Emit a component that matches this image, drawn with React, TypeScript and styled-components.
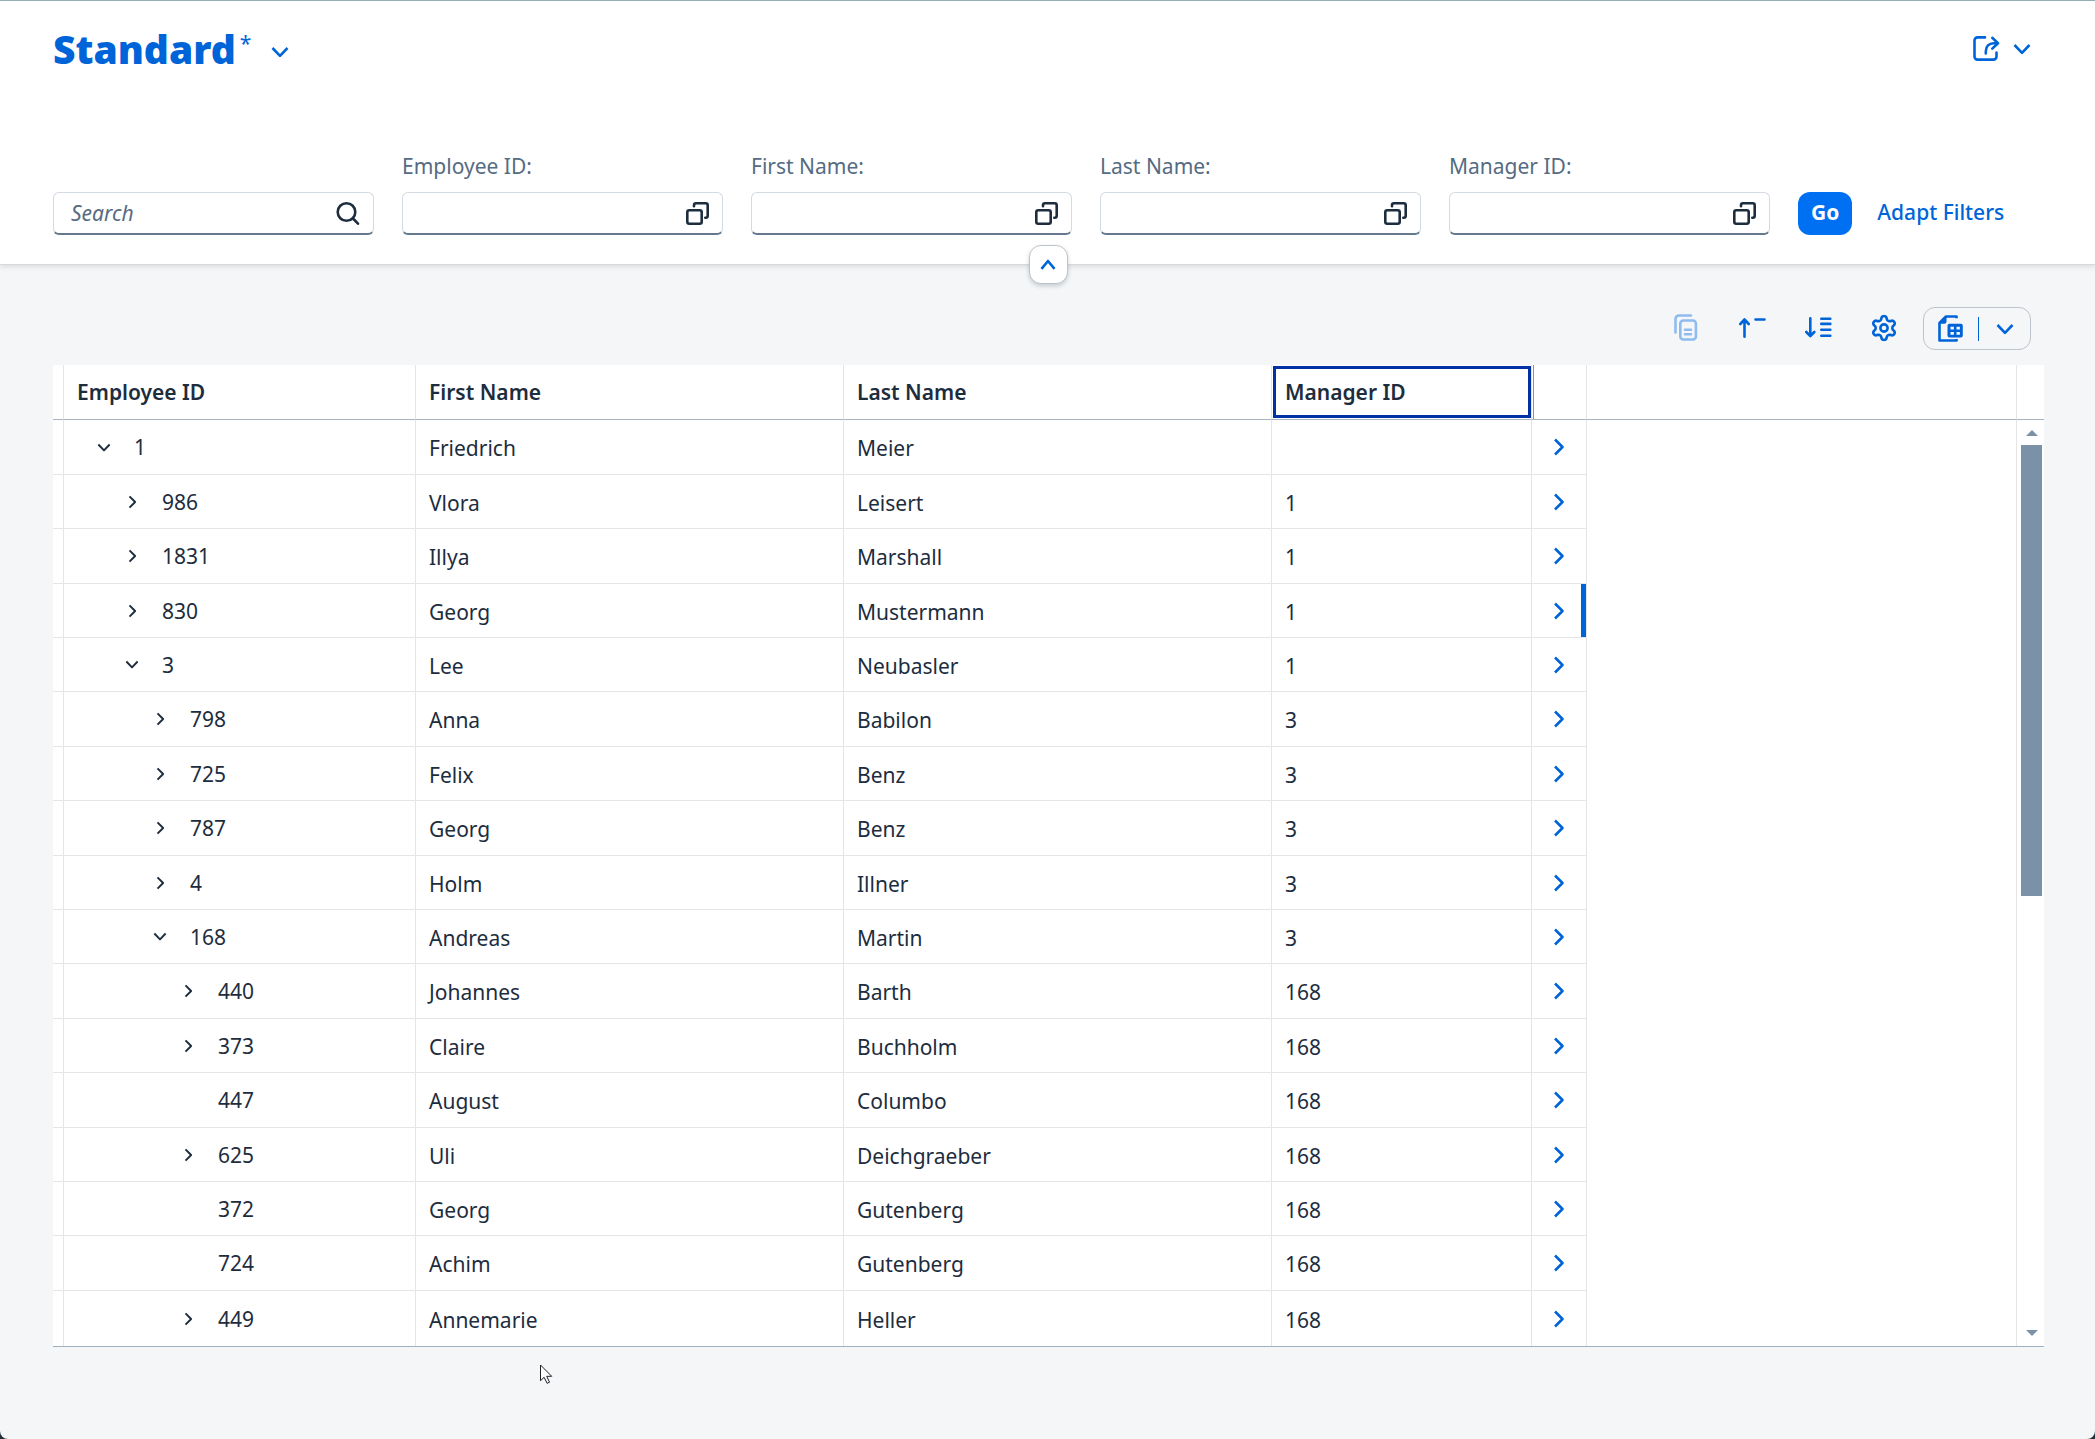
import React from "react";
import styled, { createGlobalStyle, css } from "styled-components";

const color = {
  brand: "#0064d9",
  emphasized: "#0070f2",
  text: "#1d2d3e",
  label: "#556b82",
  line: "#e5e5e5",
  headerLine: "#a8b3bd",
  page: "#f5f6f7",
  focus: "#0032a5",
  scroll: "#7b91a8",
};

const GlobalStyle = createGlobalStyle`
  *, *::before, *::after { box-sizing: border-box; }
  body {
    margin: 0;
    background: #22303a;
    color: ${color.text};
    font-family: "Noto Sans", "Open Sans", sans-serif;
    font-size: 21px;
    line-height: 28px;
  }
  button, input { font: inherit; color: inherit; }
`;

const Page = styled.div`
  min-height: 100vh;
  display: flex;
  flex-direction: column;
  background: ${color.page};
  border-top: 1px solid #8fb1b5;
  border-radius: 0 0 8px 8px;
  overflow: hidden;
  position: relative;
`;

const Header = styled.header`
  position: relative;
  background: #fff;
  padding: 24px 53px 29px;
  border-bottom: 1px solid #d9d9d9;
  box-shadow: 0 2px 5px rgba(34, 53, 72, 0.12);
`;

const TitleBar = styled.div`
  display: flex;
  justify-content: space-between;
  align-items: center;
  height: 48px;
  padding-right: 11px;
`;

const VariantButton = styled.button`
  display: flex;
  align-items: center;
  padding: 0;
  border: 0;
  background: none;
  color: ${color.brand};
  cursor: pointer;
`;

const VariantTitle = styled.h1`
  margin: 0;
  font-size: 39px;
  line-height: 48px;
  font-weight: 900;
`;

const Modified = styled.span`
  align-self: flex-start;
  margin: 4px 20px 0 4px;
`;

const VariantArrow = styled.span`
  display: flex;
  padding-top: 6px;
`;

const IconButton = styled.button<{ $width?: number }>`
  display: inline-flex;
  align-items: center;
  justify-content: center;
  gap: 13px;
  width: ${(p) => (p.$width ? `${p.$width}px` : "auto")};
  height: 43px;
  padding: 0;
  border: 0;
  background: none;
  color: ${color.brand};
  cursor: pointer;
  &:disabled { color: #8fbcf0; cursor: default; }
`;

const ToolButton = styled(IconButton)`
  width: 66px;
  padding-bottom: 2px;
`;

const FilterBar = styled.form`
  display: flex;
  align-items: flex-end;
  gap: 28px;
  margin-top: 79px;
`;

const FilterItem = styled.div`
  flex: 0 1 321px;
  min-width: 0;
  display: flex;
  flex-direction: column;
`;

const FilterLabel = styled.label`
  margin-bottom: 12px;
  color: ${color.label};
`;

const InputBox = styled.div`
  display: flex;
  align-items: center;
  height: 43px;
  padding: 0 13px 0 17px;
  background: #fff;
  border: 1px solid #d3dae1;
  border-bottom: 2px solid #64798e;
  border-radius: 6px;
`;

const TextInput = styled.input`
  flex: 1;
  min-width: 0;
  padding: 0;
  border: 0;
  outline: 0;
  background: none;
  &::placeholder { color: ${color.label}; font-style: italic; opacity: 1; }
`;

const InputIcon = styled.button`
  display: flex;
  padding: 0;
  border: 0;
  background: none;
  cursor: pointer;
`;

const FilterActions = styled.div`
  display: flex;
  gap: 9px;
`;

const ActionButton = styled.button<{ $emphasized?: boolean }>`
  height: 43px;
  padding: 0 ${(p) => (p.$emphasized ? 13 : 16)}px 3px;
  border: 0;
  border-radius: 12px;
  background: ${(p) => (p.$emphasized ? color.emphasized : "transparent")};
  color: ${(p) => (p.$emphasized ? "#fff" : color.brand)};
  font-weight: ${(p) => (p.$emphasized ? 700 : 500)};
  white-space: nowrap;
  cursor: pointer;
`;

const CollapseButton = styled.button`
  position: absolute;
  left: 50%;
  bottom: -20px;
  margin-left: -19px;
  width: 39px;
  height: 39px;
  display: flex;
  align-items: center;
  justify-content: center;
  padding: 0;
  background: #fff;
  color: ${color.brand};
  border: 1px solid #bcc3ca;
  border-radius: 12px;
  box-shadow: 0 2px 4px rgba(34, 53, 72, 0.22);
  cursor: pointer;
`;

const Main = styled.main`
  padding: 42px 51px 92px 53px;
`;

const Toolbar = styled.div`
  display: flex;
  justify-content: flex-end;
  align-items: center;
  padding: 0 13px 15px 0;
`;

const SplitButton = styled.div`
  display: flex;
  align-items: center;
  height: 43px;
  margin-left: 6px;
  border: 1px solid #bcc3ca;
  border-radius: 12px;
`;

const Separator = styled.span`
  width: 1px;
  height: 24px;
  background: ${color.brand};
`;

const TablePanel = styled.div`
  display: flex;
  background: #fff;
  border-bottom: 1px solid #9fb0c0;
`;

const Table = styled.table`
  flex: 1;
  min-width: 0;
  width: 100%;
  table-layout: fixed;
  border-collapse: separate;
  border-spacing: 0;
`;

const Column = styled.col<{ $width?: number }>`
  width: ${(p) => (p.$width ? `${p.$width}px` : "auto")};
`;

const HeadCell = styled.th<{ $resize?: boolean }>`
  position: relative;
  height: 55px;
  padding: 0;
  text-align: left;
  font-weight: 600;
  border-right: 1px solid ${color.line};
  border-bottom: 1px solid ${color.headerLine};
  ${(p) =>
    p.$resize &&
    css`
      &::before {
        content: "";
        position: absolute;
        top: 0;
        bottom: 0;
        left: 1px;
        width: 1px;
        background: #8c9299;
      }
    `}
`;

const HeadLabel = styled.div<{ $focused?: boolean }>`
  height: 52px;
  margin: 1px 0 1px 1px;
  padding: 12px;
  box-shadow: ${(p) => (p.$focused ? `inset 0 0 0 3px ${color.focus}` : "none")};
`;

const Row = styled.tr`
  height: 54px;
  &:nth-child(5n + 1), &:nth-child(5n + 3), &:last-child { height: 55px; }
`;

const Cell = styled.td<{ $marked?: boolean }>`
  padding: 2px 12px 0 13px;
  border-right: 1px solid ${color.line};
  border-bottom: 1px solid ${color.line};
  box-shadow: ${(p) => (p.$marked ? `inset -5px 0 0 ${color.brand}` : "none")};
  tr:last-child > & { border-bottom: 0; }
`;

const NavCell = styled(Cell)`
  padding: 0;
  text-align: center;
`;

const TreeCell = styled(Cell)`
  padding: 0;
`;

const FillCell = styled.td`
  padding: 0;
`;

const TreeNode = styled.div<{ $level: number }>`
  display: flex;
  align-items: center;
  gap: 14px;
  padding-left: ${(p) => 24 + p.$level * 28}px;
`;

const Toggle = styled.button`
  display: flex;
  align-items: center;
  justify-content: center;
  width: 32px;
  height: 32px;
  padding: 0;
  border: 0;
  background: none;
  cursor: pointer;
`;

const ToggleSpace = styled.span`
  width: 32px;
`;

const NavButton = styled.button`
  display: inline-flex;
  align-items: center;
  justify-content: center;
  width: 32px;
  height: 32px;
  padding: 0;
  border: 0;
  background: none;
  color: ${color.brand};
  vertical-align: middle;
  cursor: pointer;
`;

const ScrollColumn = styled.div`
  width: 28px;
  display: flex;
  flex-direction: column;
  border-left: 1px solid ${color.line};
  margin-left: -1px;
`;

const ScrollHead = styled.div`
  height: 55px;
  border-bottom: 1px solid ${color.headerLine};
`;

const ScrollTrack = styled.div`
  flex: 1;
  display: flex;
  flex-direction: column;
  align-items: center;
  padding: 10px 2px 10px 4px;
`;

const ScrollThumb = styled.div`
  width: 21px;
  height: 451px;
  margin: 9px 0 auto;
  background: ${color.scroll};
`;

const Pointer = styled.svg`
  position: absolute;
  left: 540px;
  top: 1363px;
`;

type Dir = "up" | "down" | "right";
const turn: Record<Dir, { w: number; h: number; d: string }> = {
  down: { w: 18, h: 12, d: "M1.5 2L9 9.8L16.5 2" },
  up: { w: 18, h: 12, d: "M2.5 9.8L9 2L15.5 9.8" },
  right: { w: 12, h: 18, d: "M2 1.5L9.5 9L2 16.5" },
};

function Chevron({ dir, small }: { dir: Dir; small?: boolean }) {
  const { w, h, d } = turn[dir];
  const k = small ? 0.75 : 1;
  return (
    <svg width={Math.round(w * k)} height={Math.round(h * k)} viewBox={`0 0 ${w} ${h}`} fill="none" stroke="currentColor" strokeWidth={2.6} strokeLinejoin="round" aria-hidden>
      <path d={d} />
    </svg>
  );
}

function Glyph({ w, h, children }: { w: number; h: number; children: React.ReactNode }) {
  return (
    <svg width={w} height={h} viewBox={`0 0 ${w} ${h}`} fill="none" stroke="currentColor" strokeWidth={2.6} strokeLinecap="round" strokeLinejoin="round" aria-hidden>
      {children}
    </svg>
  );
}

const SearchIcon = () => (
  <Glyph w={24} h={25}>
    <circle cx="10.5" cy="11" r="8.8" />
    <path d="M17 17.5L22 22.7" />
  </Glyph>
);

const ValueHelpIcon = () => (
  <Glyph w={23} h={23}>
    <rect x="1.3" y="8.3" width="14.4" height="13.4" rx="2" />
    <path d="M8 4.3V3.3a2 2 0 0 1 2-2h9.7a2 2 0 0 1 2 2v10.4a2 2 0 0 1-2 2h-.4" />
  </Glyph>
);

const ShareIcon = () => (
  <Glyph w={27} h={26}>
    <path d="M12 1.4H4.5a3 3 0 0 0-3 3v16.2a3 3 0 0 0 3 3h16a3 3 0 0 0 3-3V16.5" />
    <path d="M12.8 17.5v-2.3c0-5 3-8 8-8h3.7M19.3 1.8L25 7.2L19.3 12.6" />
  </Glyph>
);

const CopyIcon = () => (
  <Glyph w={24} h={27}>
    <path d="M17 1.5H5a3.5 3.5 0 0 0-3.5 3.5v13.5" />
    <rect x="6.3" y="6.5" width="15.6" height="19" rx="3" />
    <path d="M11 15.7h6M11 20.3h6" />
  </Glyph>
);

const CollapseIcon = () => (
  <Glyph w={27} h={20}>
    <path d="M5.5 18.7V2M1.3 6L5.5 1.5L9.7 6M16.5 1.5h9" />
  </Glyph>
);

const ExpandIcon = () => (
  <Glyph w={27} h={21}>
    <path d="M5.3 1.3V19M1.3 15L5.3 19.2L9.3 15M16.3 1.7h9M16.3 6.9h9M16.3 12.8h9M16.3 18.7h9" />
  </Glyph>
);

const gearPath =
  Array.from({ length: 120 }, (_, i) => {
    const a = (i / 120) * Math.PI * 2;
    const r = 10.1 + 1.9 * Math.tanh(1.6 * Math.cos(6 * a));
    return `${i ? "L" : "M"}${(13 + r * Math.sin(a)).toFixed(2)} ${(14 - r * Math.cos(a)).toFixed(2)}`;
  }).join("") + "Z";

const GearIcon = () => (
  <Glyph w={26} h={28}>
    <path d={gearPath} />
    <circle cx="13" cy="14" r="3.6" />
  </Glyph>
);

const ExportIcon = () => (
  <Glyph w={26} h={27}>
    <path d="M18.5 3.2V1.5H8L1.5 8v17.5h17V24" strokeLinecap="butt" />
    <path d="M1 8.8V7.5L7.5 1h1v5.5a2.3 2.3 0 0 1-2.3 2.3z" fill="currentColor" stroke="none" />
    <path
      d="M11.5 8.8h11.3a2 2 0 0 1 2 2v9.7a2 2 0 0 1-2 2H11.500a2 2 0 0 1-2-2v-9.700a2 2 0 0 1 2-2zM12.500 11.700v2.700h3.400v-2.700zM18.500 11.700v2.700h3.400v-2.700zM12.500 17v2.700h3.400V17zM18.500 17v2.700h3.400V17z"
      fill="currentColor"
      fillRule="evenodd"
      stroke="none"
    />
  </Glyph>
);

type NodeState = "open" | "closed" | "leaf";
type Employee = { id: string; level: number; state: NodeState; first: string; last: string; manager: string; marked?: boolean };

const employees: Employee[] = [
  { id: "1", level: 0, state: "open", first: "Friedrich", last: "Meier", manager: "" },
  { id: "986", level: 1, state: "closed", first: "Vlora", last: "Leisert", manager: "1" },
  { id: "1831", level: 1, state: "closed", first: "Illya", last: "Marshall", manager: "1" },
  { id: "830", level: 1, state: "closed", first: "Georg", last: "Mustermann", manager: "1", marked: true },
  { id: "3", level: 1, state: "open", first: "Lee", last: "Neubasler", manager: "1" },
  { id: "798", level: 2, state: "closed", first: "Anna", last: "Babilon", manager: "3" },
  { id: "725", level: 2, state: "closed", first: "Felix", last: "Benz", manager: "3" },
  { id: "787", level: 2, state: "closed", first: "Georg", last: "Benz", manager: "3" },
  { id: "4", level: 2, state: "closed", first: "Holm", last: "Illner", manager: "3" },
  { id: "168", level: 2, state: "open", first: "Andreas", last: "Martin", manager: "3" },
  { id: "440", level: 3, state: "closed", first: "Johannes", last: "Barth", manager: "168" },
  { id: "373", level: 3, state: "closed", first: "Claire", last: "Buchholm", manager: "168" },
  { id: "447", level: 3, state: "leaf", first: "August", last: "Columbo", manager: "168" },
  { id: "625", level: 3, state: "closed", first: "Uli", last: "Deichgraeber", manager: "168" },
  { id: "372", level: 3, state: "leaf", first: "Georg", last: "Gutenberg", manager: "168" },
  { id: "724", level: 3, state: "leaf", first: "Achim", last: "Gutenberg", manager: "168" },
  { id: "449", level: 3, state: "closed", first: "Annemarie", last: "Heller", manager: "168" },
];

const filters = [
  { id: "employee-id", label: "Employee ID:" },
  { id: "first-name", label: "First Name:" },
  { id: "last-name", label: "Last Name:" },
  { id: "manager-id", label: "Manager ID:" },
];

function EmployeeRow({ e }: { e: Employee }) {
  return (
    <Row>
      <TreeCell />
      <TreeCell>
        <TreeNode $level={e.level}>
          {e.state === "leaf" ? (
            <ToggleSpace />
          ) : (
            <Toggle aria-label="Toggle node" aria-expanded={e.state === "open"}>
              <Chevron dir={e.state === "open" ? "down" : "right"} small />
            </Toggle>
          )}
          <span>{e.id}</span>
        </TreeNode>
      </TreeCell>
      <Cell>{e.first}</Cell>
      <Cell>{e.last}</Cell>
      <Cell>{e.manager}</Cell>
      <NavCell $marked={e.marked}>
        <NavButton aria-label="Details">
          <Chevron dir="right" />
        </NavButton>
      </NavCell>
      <FillCell />
    </Row>
  );
}

export default function App() {
  return (
    <>
      <GlobalStyle />
      <Page>
        <Header>
          <TitleBar>
            <VariantButton>
              <VariantTitle>Standard</VariantTitle>
              <Modified>*</Modified>
              <VariantArrow>
                <Chevron dir="down" />
              </VariantArrow>
            </VariantButton>
            <IconButton aria-label="Share">
              <ShareIcon />
              <Chevron dir="down" />
            </IconButton>
          </TitleBar>
          <FilterBar onSubmit={(ev) => ev.preventDefault()}>
            <FilterItem>
              <InputBox>
                <TextInput type="text" placeholder="Search" aria-label="Search" />
                <InputIcon type="button" aria-label="Start search">
                  <SearchIcon />
                </InputIcon>
              </InputBox>
            </FilterItem>
            {filters.map((f) => (
              <FilterItem key={f.id}>
                <FilterLabel htmlFor={f.id}>{f.label}</FilterLabel>
                <InputBox>
                  <TextInput type="text" id={f.id} />
                  <InputIcon type="button" aria-label="Value help">
                    <ValueHelpIcon />
                  </InputIcon>
                </InputBox>
              </FilterItem>
            ))}
            <FilterActions>
              <ActionButton type="submit" $emphasized>
                Go
              </ActionButton>
              <ActionButton type="button">Adapt Filters</ActionButton>
            </FilterActions>
          </FilterBar>
          <CollapseButton aria-label="Collapse header">
            <Chevron dir="up" />
          </CollapseButton>
        </Header>
        <Main>
          <Toolbar>
            <ToolButton disabled aria-label="Copy">
              <CopyIcon />
            </ToolButton>
            <ToolButton aria-label="Collapse">
              <CollapseIcon />
            </ToolButton>
            <ToolButton aria-label="Expand">
              <ExpandIcon />
            </ToolButton>
            <ToolButton aria-label="Settings">
              <GearIcon />
            </ToolButton>
            <SplitButton>
              <IconButton $width={54} aria-label="Export">
                <ExportIcon />
              </IconButton>
              <Separator />
              <IconButton $width={51} aria-label="Export options">
                <Chevron dir="down" />
              </IconButton>
            </SplitButton>
          </Toolbar>
          <TablePanel>
            <Table>
              <colgroup>
                <Column $width={11} />
                <Column $width={352} />
                <Column $width={428} />
                <Column $width={428} />
                <Column $width={260} />
                <Column $width={55} />
                <Column />
              </colgroup>
              <thead>
                <tr>
                  <HeadCell />
                  <HeadCell><HeadLabel>Employee ID</HeadLabel></HeadCell>
                  <HeadCell><HeadLabel>First Name</HeadLabel></HeadCell>
                  <HeadCell><HeadLabel>Last Name</HeadLabel></HeadCell>
                  <HeadCell><HeadLabel $focused>Manager ID</HeadLabel></HeadCell>
                  <HeadCell $resize />
                  <HeadCell />
                </tr>
              </thead>
              <tbody>
                {employees.map((e) => (
                  <EmployeeRow key={e.id} e={e} />
                ))}
              </tbody>
            </Table>
            <ScrollColumn>
              <ScrollHead />
              <ScrollTrack>
                <svg width="12" height="6" viewBox="0 0 12 6" fill={color.scroll} aria-hidden><path d="M0 6L6 0L12 6z" /></svg>
                <ScrollThumb />
                <svg width="12" height="6" viewBox="0 0 12 6" fill={color.scroll} aria-hidden><path d="M0 0L6 6L12 0z" /></svg>
              </ScrollTrack>
            </ScrollColumn>
          </TablePanel>
        </Main>
        <Pointer width="13" height="20" viewBox="0 0 13 20" fill="#fff" stroke="#1b2228" aria-hidden>
          <path d="M.5 1v15.700l3.600-3.400l3 6l2.400-1.100l-2.800-5.900h5z" />
        </Pointer>
      </Page>
    </>
  );
}
